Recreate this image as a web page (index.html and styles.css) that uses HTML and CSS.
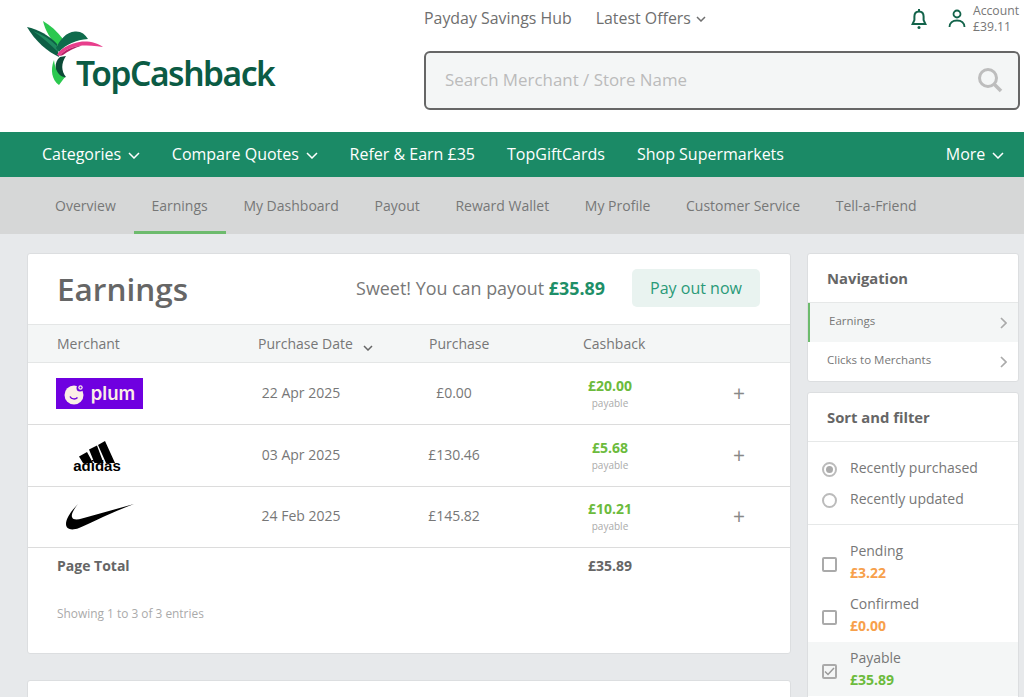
FILE: index.html
```html
<!DOCTYPE html>
<html lang="en">
<head>
<meta charset="utf-8">
<title>TopCashback Earnings</title>
<link rel="stylesheet" href="styles.css">
</head>
<body>
<header class="top">
  <a class="logo">
    <svg class="logo-svg" width="270" height="85" viewBox="20 15 270 85">
      <path fill="#2bc84f" d="M43 21 C50 25 57 31 63 39 L58 46 C50 39 45 30 43 21Z"/>
      <path fill="#0d5f45" d="M27 27 C38 29 50 36 57 44 L59 57 C48 52 35 41 27 27Z"/>
      <path fill="#1f8a5f" d="M33 31 C42 37 50 44 58 52 L57 46 C50 39 42 34 33 31Z"/>
      <path fill="#0f6b4c" d="M56 48 C60 40 66 32 75 31.500 C81 31 85 34 88 39 C76 40 66 44 59 52Z"/>
      <path fill="#e83e8c" d="M57 55 C60 49 68 44 82 41.500 C90 41 98 43 103 47 C95 45.500 88 45.500 82 45.500 C72 46.500 64 50 60 56Z"/>
      <path fill="#b81f66" d="M60 56 C64 50 72 46.500 82 45.500 C74 48 68 51 63 55Z"/>
      <path fill="#0b4a36" d="M60 57 C54 62 54 72 60 79 L66 77 C61 71 61 63 66 56Z"/>
      <path fill="#2bc84f" d="M54 60 C50 70 52 80 59 85 L65 77 C59 77 55 70 54 60Z"/>
      <text class="logo-word" x="76" y="85.500">TopCashback</text>
    </svg>
  </a>
  <div class="top-right">
    <div class="top-links">
      <a class="top-link">Payday Savings Hub</a>
      <a class="top-link">Latest Offers <svg class="chev" width="10" height="6" viewBox="0 0 10 6"><path d="M1 1l4 4 4-4" fill="none" stroke="currentColor" stroke-width="1.500"/></svg></a>
      <span class="top-icons">
        <svg class="bell" width="18" height="20" viewBox="0 0 18 20"><path d="M9 2.500c-3 0-4.600 2.200-4.600 5v3.600L2.600 15h12.800l-1.800-3.900V7.500c0-2.800-1.600-5-4.600-5z" fill="none" stroke="#12634a" stroke-width="2"/><circle cx="9" cy="18.500" r="1.500" fill="#12634a"/><rect x="8" y="0" width="2" height="3" fill="#12634a"/></svg>
        <span class="account">
          <svg width="18" height="19" viewBox="0 0 18 19"><circle cx="9" cy="5" r="3.500" fill="none" stroke="#12634a" stroke-width="1.800"/><path d="M1.500 18c0-4 3-6.500 7.500-6.500s7.500 2.500 7.500 6.500" fill="none" stroke="#12634a" stroke-width="1.800"/></svg>
          <span class="account-text">Account<br>£39.11</span>
        </span>
      </span>
    </div>
    <div class="search">
      <span class="search-text">Search Merchant / Store Name</span>
      <svg width="26" height="26" viewBox="0 0 26 26"><circle cx="11" cy="11" r="8.500" fill="none" stroke="#bdbdbd" stroke-width="3"/><path d="M17 17l7 7" stroke="#bdbdbd" stroke-width="3.500"/></svg>
    </div>
  </div>
</header>

<nav class="mainnav">
  <a>Categories <svg class="chev-w" width="12" height="7" viewBox="0 0 12 7"><path d="M1 1l5 5 5-5" fill="none" stroke="#fff" stroke-width="1.500"/></svg></a>
  <a>Compare Quotes <svg class="chev-w" width="12" height="7" viewBox="0 0 12 7"><path d="M1 1l5 5 5-5" fill="none" stroke="#fff" stroke-width="1.500"/></svg></a>
  <a>Refer &amp; Earn £35</a>
  <a>TopGiftCards</a>
  <a>Shop Supermarkets</a>
  <a class="more">More <svg class="chev-w" width="12" height="7" viewBox="0 0 12 7"><path d="M1 1l5 5 5-5" fill="none" stroke="#fff" stroke-width="1.500"/></svg></a>
</nav>

<nav class="subnav">
  <a>Overview</a>
  <a class="active">Earnings</a>
  <a>My Dashboard</a>
  <a>Payout</a>
  <a>Reward Wallet</a>
  <a>My Profile</a>
  <a>Customer Service</a>
  <a>Tell-a-Friend</a>
</nav>

<div class="content">
  <main class="main-col">
    <section class="card earnings">
      <div class="earn-head">
        <h1>Earnings</h1>
        <p class="sweet">Sweet! You can payout <b>£35.89</b></p>
        <a class="payout-btn">Pay out now</a>
      </div>
      <div class="thead">
        <span class="th-merchant">Merchant</span>
        <span class="th-date">Purchase Date <svg class="sort" width="10" height="6" viewBox="0 0 10 6"><path d="M1 1l4 4 4-4" fill="none" stroke="#666" stroke-width="1.500"/></svg></span>
        <span class="th-purchase">Purchase</span>
        <span class="th-cashback">Cashback</span>
      </div>
      <div class="row">
        <span class="logo-cell"><span class="plum"><svg width="22" height="22" viewBox="0 0 22 22"><circle cx="10" cy="12" r="9.500" fill="#fbeee6"/><circle cx="16" cy="5" r="3.500" fill="#6f00e0"/><circle cx="16.500" cy="4.500" r="2.200" fill="#fbeee6"/><circle cx="16.500" cy="4.500" r="1" fill="#6f00e0"/><path d="M6 13.500c1.500 3 5.500 3 7.500 1" fill="none" stroke="#6f00e0" stroke-width="1.500"/></svg>plum</span></span>
        <span>22 Apr 2025</span><span>£0.00</span>
        <span class="cb"><b>£20.00</b><small>payable</small></span><span class="plus">+</span>
      </div>
      <div class="row">
        <span class="logo-cell"><span class="adidas"><svg width="36" height="22" viewBox="0 0 36 22"><path d="M0 15.500L8 11 14 22H4z M10 8.500L18 4.500 24.500 22H15.500z M19 4L26 0 36 22H27z" fill="#000"/></svg><i>adidas</i></span></span>
        <span>03 Apr 2025</span><span>£130.46</span>
        <span class="cb"><b>£5.68</b><small>payable</small></span><span class="plus">+</span>
      </div>
      <div class="row">
        <span class="logo-cell"><svg class="nike" width="68" height="26" viewBox="0 0 68 26"><path d="M12 0C8 5 5 10 6 13 7 16 11 16 16 14.500L68 0C42 10 25 19 13 24 5 27 0 25 0 20 0 14 6 6 12 0z" fill="#000"/></svg></span>
        <span>24 Feb 2025</span><span>£145.82</span>
        <span class="cb"><b>£10.21</b><small>payable</small></span><span class="plus">+</span>
      </div>
      <div class="total">
        <b class="total-label">Page Total</b>
        <b class="total-val">£35.89</b>
      </div>
      <p class="entries">Showing 1 to 3 of 3 entries</p>
    </section>
    <section class="card lower"></section>
  </main>
  <aside class="side">
    <section class="card side-nav">
      <h2>Navigation</h2>
      <a class="side-link current">Earnings<svg width="7" height="12" viewBox="0 0 7 12"><path d="M1 1l5 5-5 5" fill="none" stroke="#aaa" stroke-width="1.700"/></svg></a>
      <a class="side-link">Clicks to Merchants<svg width="7" height="12" viewBox="0 0 7 12"><path d="M1 1l5 5-5 5" fill="none" stroke="#aaa" stroke-width="1.700"/></svg></a>
    </section>
    <section class="card side-filter">
      <h2>Sort and filter</h2>
      <div class="radios">
        <label class="radio-row"><span class="radio on"></span>Recently purchased</label>
        <label class="radio-row"><span class="radio"></span>Recently updated</label>
      </div>
      <div class="checks">
        <div class="check-row"><span class="box"></span><span class="check-label">Pending<b class="orange">£3.22</b></span></div>
        <div class="check-row"><span class="box"></span><span class="check-label">Confirmed<b class="orange">£0.00</b></span></div>
        <div class="check-row sel"><span class="box"><svg width="11" height="9" viewBox="0 0 11 9"><path d="M1 4.500l3 3 6-6.500" fill="none" stroke="#999" stroke-width="1.500"/></svg></span><span class="check-label">Payable<b class="green">£35.89</b></span></div>
      </div>
    </section>
  </aside>
</div>
</body>
</html>
```

FILE: styles.css
```css
* { box-sizing: border-box; }
html, body { margin: 0; height: 697px; overflow: hidden; }
body { background: #e7e9eb; font-family: "Open Sans", sans-serif; color: #666; }
a { color: inherit; text-decoration: none; }

.top { display: flex; height: 132px; background: #fff; }
.logo { display: block; width: 424px; padding: 15px 0 0 20px; }
.logo-svg { display: block; }
.logo-word { font-family: "Noto Sans", sans-serif; font-weight: 600; font-size: 33.500px; letter-spacing: -1.450px; fill: #0b5b44; }
.top-right { width: 596px; }
.top-links { display: flex; align-items: flex-start; height: 51px; font-size: 15.900px; color: #6f6f6f; }
.top-link { padding-top: 7px; margin-right: 24px; }
.chev { vertical-align: 2px; margin-left: 1px; }
.top-icons { display: flex; margin-left: auto; padding-top: 3px; margin-right: 1px; }
.bell { margin-top: 6px; margin-right: 20px; }
.account { display: flex; gap: 7px; }
.account svg { margin-top: 6px; }
.account-text { font-size: 12.200px; line-height: 16px; color: #777; }
.search { display: flex; align-items: center; justify-content: space-between; height: 59px; padding: 0 15px 2px 19px; background: #f4f6f6; border: 2px solid #666; border-radius: 6px; }
.search-text { font-size: 16.900px; color: #bbb; }

.mainnav { display: flex; align-items: center; height: 45px; padding: 0 20px 2px 42px; gap: 32px; background: #1b8a66; color: #fff; font-size: 16px; font-weight: 500; }
.chev-w { margin-left: 2.500px; vertical-align: 1px; }
.more { margin-left: auto; }

.subnav { display: flex; height: 57px; padding-left: 37.200px; background: #d6d7d7; font-size: 14px; color: #777; }
.subnav a { display: flex; align-items: center; padding: 2px 17.850px 0; border-bottom: 3px solid transparent; }
.subnav a.active { border-bottom-color: #6dbb6d; }

.content { display: flex; align-items: flex-start; gap: 16px; padding: 19px 5px 0 27px; }
.main-col { width: 764px; }
.side { width: 212px; }
.card { background: #fff; border: 1px solid #dcdee0; border-radius: 3px; }

.earnings { height: 401px; }
.earn-head { display: flex; align-items: center; height: 70px; padding: 0 30px 2px 29px; }
h1 { margin: 1px 0 0; font-size: 31.500px; font-weight: 600; color: #666; }
.sweet { margin: 0 27px 0 auto; font-size: 17.900px; color: #777; }
.sweet b { color: #1e8f68; font-weight: 700; }
.payout-btn { display: flex; align-items: center; justify-content: center; width: 128px; height: 38px; background: #e9f3f0; border-radius: 5px; color: #2a9a78; font-size: 16px; }

.thead { display: grid; grid-template-columns: 201px 171px 154px 1fr; align-items: center; height: 39px; padding: 0 0 1px 29px; background: #f4f6f6; border-top: 1px solid #e4e6e6; border-bottom: 1px solid #e4e6e6; font-size: 14px; color: #777; }
.sort { margin-left: 7px; vertical-align: -2px; }

.row { display: grid; grid-template-columns: 174px 140px 166px 146px 1fr; align-items: center; height: 62px; padding: 0 0 3px 29px; border-bottom: 1px solid #dcdcdc; font-size: 14px; color: #777; text-align: center; }
.row:nth-of-type(5) { height: 61px; }
.logo-cell { display: flex; justify-content: flex-start; align-items: center; margin-top: 3px; }
.plum { display: flex; align-items: center; justify-content: center; gap: 5px; width: 87px; height: 31px; margin-left: -1px; background: #6f00e0; color: #fbeee6; font-family: "Inter", sans-serif; font-size: 18.500px; font-weight: 600; line-height: 1; }
.adidas { display: flex; flex-direction: column; align-items: center; width: 50px; margin-left: 15px; color: #000; }
.adidas i { margin-top: -2px; font-family: "Liberation Sans", sans-serif; font-size: 15px; font-weight: 700; font-style: normal; line-height: 10px; }
.nike { margin-left: 9px; }
.cb { display: flex; flex-direction: column; align-items: center; margin-top: 1px; }
.cb b { font-size: 14px; color: #6cbb3c; line-height: 19px; }
.cb small { margin-top: 2px; font-size: 10px; color: #aaa; line-height: 13px; }
.plus { margin-top: 2px; padding-left: 5px; font-size: 21px; font-weight: 400; line-height: 1; color: #888; }

.total { display: grid; grid-template-columns: 531px 1fr; align-items: center; height: 38px; padding: 0 0 3px 29px; font-size: 14px; color: #666; }
.entries { margin: 19px 0 0 29px; font-size: 11.900px; color: #aaa; }

.lower { height: 60px; margin-top: 26px; }

.side h2 { margin: 0; padding: 14px 19px 0; height: 49px; font-size: 14.800px; font-weight: 700; color: #666; border-bottom: 1px solid #e6e8e8; line-height: 20px; }
.side-nav { height: 129px; }
.side-link { display: flex; align-items: center; justify-content: space-between; height: 39px; padding: 0 11px 4px 19px; font-size: 11.500px; color: #777; }
.side-link svg { margin-top: 4px; }
.side-link.current { background: #f4f6f6; border-left: 2px solid #6dbb6d; }
.side-filter { margin-top: 10px; height: 400px; }
.radios { padding: 10px 0; border-bottom: 1px solid #e6e8e8; }
.radio-row { display: flex; align-items: center; gap: 13px; height: 31px; padding-left: 14px; font-size: 14px; color: #777; }
.radio { display: block; position: relative; width: 15px; height: 15px; margin-top: 3px; border: 2px solid #bbb; border-radius: 50%; }
.radio.on::after { content: ""; position: absolute; inset: 2px; border-radius: 50%; background: #aaa; }
.checks { padding-top: 11px; }
.check-row { display: flex; align-items: center; gap: 13px; height: 54px; padding-left: 14px; }
.check-row:first-child { height: 52px; }
.check-row.sel { background: #f4f6f6; }
.box { display: flex; align-items: center; justify-content: center; width: 15px; height: 15px; margin-top: 4px; border: 2px solid #aaa; border-radius: 2px; }
.check-label { display: flex; flex-direction: column; font-size: 14px; line-height: 22px; color: #777; }
.check-label b { font-weight: 700; }
.orange { color: #f7a04b; }
.green { color: #6cbb3c; }
```
